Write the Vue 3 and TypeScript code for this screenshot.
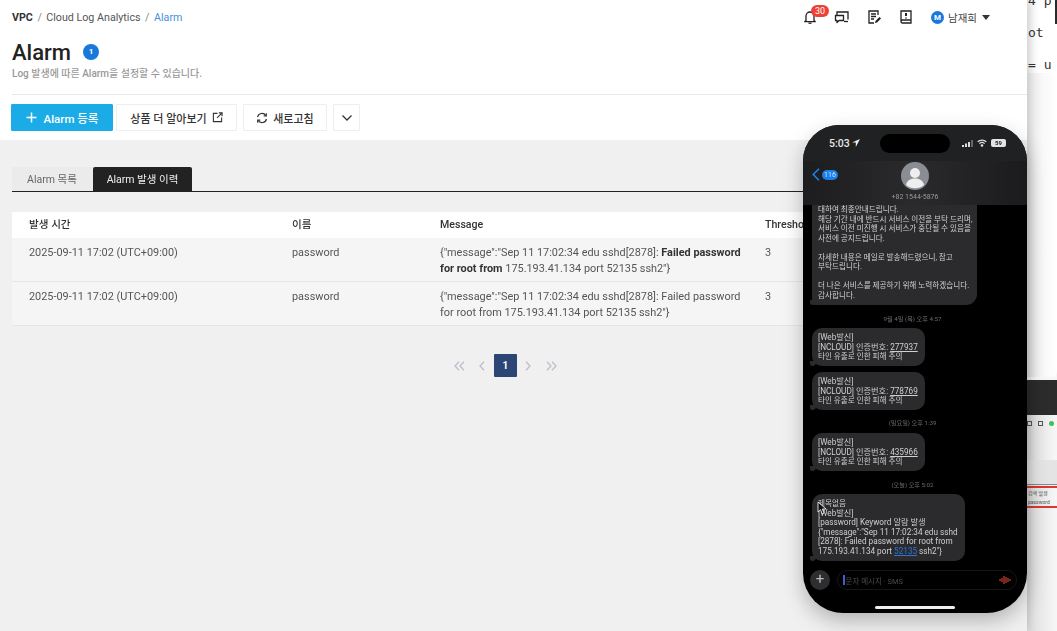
<template>
  <div class="screen">
    <main class="console">
      <header class="page-head">
        <div class="topbar">
          <nav class="crumbs">
            <b>VPC</b><i>/</i><span>Cloud Log Analytics</span><i>/</i><span class="current">Alarm</span>
          </nav>
          <div class="tools">
            <span class="tool bell">
              <svg width="16" height="16" viewBox="0 0 16 16" fill="none" stroke="#222" stroke-width="1.3"><path d="M4 11.5V7a4 4 0 0 1 8 0v4.5l1.3 1.2H2.7z" stroke-linejoin="round" /><path d="M6.5 14.2h3" /></svg>
              <em>30</em>
            </span>
            <span class="tool">
              <svg width="16" height="16" viewBox="0 0 16 16" fill="none" stroke="#222" stroke-width="1.3"><path d="M3 10V3h11v7.5" /><path d="M1.5 6.5h8v5H5l-2 2v-2H1.500z" fill="#fff" stroke-linejoin="round" /><path d="M10 12.500h4" /></svg>
            </span>
            <span class="tool">
              <svg width="16" height="16" viewBox="0 0 16 16" fill="none" stroke="#222" stroke-width="1.300"><path d="M12 6V2H3v12h5" /><path d="M5 5h5M5 7.500h5M5 10h3" /><path d="M9 14l.5-2 4-4 1.500 1.500-4 4z" fill="#222" stroke="none" /></svg>
            </span>
            <span class="tool">
              <svg width="16" height="16" viewBox="0 0 16 16" fill="none" stroke="#222" stroke-width="1.300"><path d="M3 12.500V2h10v12H4.500A1.500 1.500 0 0 1 3 12.500a1.500 1.500 0 0 1 1.500-1.500H13" /><path d="M8 4v3" stroke-width="2" /><circle cx="8" cy="9" r=".8" fill="#222" stroke="none" /></svg>
            </span>
            <span class="user"><span class="avatar">M</span>남재희<span class="caret" /></span>
          </div>
        </div>

        <div class="title-row">
          <h1>Alarm</h1>
          <span class="count">1</span>
        </div>
        <p class="desc">Log 발생에 따른 Alarm을 설정할 수 있습니다.</p>

        <div class="actions">
          <button class="btn primary">
            <svg width="11" height="11" viewBox="0 0 11 11" stroke="#fff" stroke-width="1.500"><path d="M5.500 0.500v10M0.500 5.500h10" /></svg>
            Alarm 등록
          </button>
          <button class="btn">
            상품 더 알아보기
            <svg width="11" height="11" viewBox="0 0 12 12" fill="none" stroke="#333" stroke-width="1.200"><path d="M6 1.500H1.500v9h9V6" /><path d="M5.500 6.500l5-5M7.500 1h3.500v3.500" /></svg>
          </button>
          <button class="btn">
            <svg width="12" height="12" viewBox="0 0 12 12" fill="none" stroke="#333" stroke-width="1.200"><path d="M1.500 5a4.600 4.600 0 0 1 8.300-1.500M10.500 7a4.600 4.600 0 0 1-8.300 1.500" /><path d="M10.300 1.200v2.600H7.700M1.700 10.800V8.200h2.600" /></svg>
            새로고침
          </button>
          <button class="btn square">
            <svg width="12" height="8" viewBox="0 0 12 8" fill="none" stroke="#333" stroke-width="1.300"><path d="M1.500 1.500L6 6l4.500-4.500" /></svg>
          </button>
        </div>
      </header>

      <section class="content">
        <div class="tabs">
          <span class="tab">Alarm 목록</span>
          <span class="tab active">Alarm 발생 이력</span>
        </div>

        <div class="table">
          <div class="row head">
            <div v-for="col in columns" :key="col">{{ col }}</div>
          </div>
          <div v-for="(row, i) in rows" :key="i" class="row">
            <div>{{ row.time }}</div>
            <div>{{ row.name }}</div>
            <div>{{ row.before }}<b v-if="row.strong">{{ row.strong }}</b>{{ row.after }}</div>
            <div>{{ row.threshold }}</div>
          </div>
        </div>

        <div class="pager">
          <svg class="far-left" width="11" height="10" viewBox="0 0 11 10" fill="none" stroke="#bcbfc8" stroke-width="1.300"><path d="M5 .8L1 5l4 4.200M10 .8L6 5l4 4.200" /></svg>
          <svg width="6" height="10" viewBox="0 0 6 10" fill="none" stroke="#bcbfc8" stroke-width="1.300"><path d="M5 .8L1 5l4 4.200" /></svg>
          <span class="page">1</span>
          <svg width="6" height="10" viewBox="0 0 6 10" fill="none" stroke="#bcbfc8" stroke-width="1.300"><path d="M1 .8L5 5 1 9.200" /></svg>
          <svg class="far-right" width="11" height="10" viewBox="0 0 11 10" fill="none" stroke="#bcbfc8" stroke-width="1.300"><path d="M1 .8L5 5 1 9.200M6 .8L10 5 6 9.200" /></svg>
        </div>
      </section>
    </main>

    <aside class="behind">
      <pre class="code">4 p

ot

= u</pre>
      <div class="blank" />
      <div class="dark-band" />
      <div class="browser">
        <div class="browser-bar">
          <span class="mini" />
          <span class="mini" />
          <span class="dot" />
          <span class="bar-text">A</span>
        </div>
        <div class="browser-grey" />
        <div class="browser-rows">
          <span>검색 발생</span>
          <span>password</span>
        </div>
      </div>
      <span class="sliver" />
    </aside>

    <div class="phone">
      <div class="status">
        <span class="clock">5:03
          <svg width="8" height="8" viewBox="0 0 8 8" fill="#eee"><path d="M8 0L0 3.600h3.800V8z" /></svg>
        </span>
        <span class="island" />
        <span class="signals">
          <svg width="11" height="7" viewBox="0 0 11 7" fill="#ddd"><rect y="5" width="2" height="2" /><rect x="3" y="3.500" width="2" height="3.500" /><rect x="6" y="2" width="2" height="5" /><rect x="9" width="2" height="7" fill="#666" /></svg>
          <svg width="10" height="8" viewBox="0 0 10 8" fill="none" stroke="#ddd" stroke-width="1.300"><path d="M.7 2.800a6.200 6.200 0 0 1 8.600 0M2.400 4.600a3.800 3.800 0 0 1 5.200 0" /><circle cx="5" cy="6.500" r=".7" fill="#ddd" /></svg>
          <span class="battery">59</span>
        </span>
      </div>

      <div class="contact">
        <span class="back">
          <svg width="8" height="13" viewBox="0 0 8 13" fill="none" stroke="#1a84f0" stroke-width="1.500"><path d="M7 .8L1.200 6.500 7 12.200" /></svg>
          <span class="unread">116</span>
        </span>
        <svg class="face" width="28" height="28" viewBox="0 0 28 28"><circle cx="14" cy="14" r="14" fill="#8b8d94" /><circle cx="14" cy="11" r="5" fill="#eee" /><path d="M5 23c1-5 5-6.500 9-6.500s8 1.500 9 6.500a14 14 0 0 1-18 0z" fill="#eee" /></svg>
        <span class="number">+82 1544-5876</span>
      </div>

      <div class="thread">
        <template v-for="(item, i) in thread" :key="i">
          <div v-if="item.stamp" class="stamp" :style="{ marginTop: item.gap + 'px' }">{{ item.stamp }}</div>
          <div v-else class="bubble" :style="{ marginTop: item.gap + 'px' }">
            <div v-for="(line, j) in item.lines" :key="j" :class="['line', { ko: line.ko }]">
              <template v-if="line.code">{{ line.text }}<u>{{ line.code }}</u></template>
              <template v-else-if="line.link">{{ line.text }}<a>{{ line.link }}</a>{{ line.after }}</template>
              <template v-else>{{ line.text }}</template>
            </div>
          </div>
        </template>
        <svg class="pointer" width="10" height="14" viewBox="0 0 10 14"><path d="M1 1v10l2.500-2.300L5.300 13l1.800-.8-1.800-4.200H9z" fill="#111" stroke="#fff" stroke-width=".8" /></svg>
      </div>

      <div class="compose">
        <span class="plus">+</span>
        <div class="field">
          <span class="text-caret" />
          <span class="hint">문자 메시지 · SMS</span>
          <svg width="12" height="10" viewBox="0 0 12 10" stroke="#c8402f" stroke-width="1.200"><path d="M1 4v2M3 3v4M5 1v8M7 2v6M9 3v4M11 4v2" /></svg>
        </div>
      </div>
      <div class="home" />
    </div>
  </div>
</template>

<script setup lang="ts">
interface Line {
  text: string;
  ko?: boolean;
  code?: string;
  link?: string;
  after?: string;
}

interface ThreadItem {
  stamp?: string;
  gap: number;
  lines?: Line[];
}

const columns = ['발생 시간', '이름', 'Message', 'Threshold'];

const rows = [
  {
    time: '2025-09-11 17:02 (UTC+09:00)',
    name: 'password',
    before: '{"message":"Sep 11 17:02:34 edu sshd[2878]: ',
    strong: 'Failed password for root from',
    after: ' 175.193.41.134 port 52135 ssh2"}',
    threshold: 3,
  },
  {
    time: '2025-09-11 17:02 (UTC+09:00)',
    name: 'password',
    before: '{"message":"Sep 11 17:02:34 edu sshd[2878]: Failed password for root from 175.193.41.134 port 52135 ssh2"}',
    strong: '',
    after: '',
    threshold: 3,
  },
];

const otp = (code: string): Line[] => [
  { text: '[Web발신]' },
  { text: '[NCLOUD] 인증번호: ', code },
  { text: '타인 유출로 인한 피해 주의', ko: true },
];

const thread: ThreadItem[] = [
  {
    gap: 0,
    lines: [
      { text: '대하여 최종안내드립니다.', ko: true },
      { text: '해당 기간 내에 반드시 서비스 이전을 부탁 드리며,', ko: true },
      { text: '서비스 이전 미진행 시 서비스가 중단될 수 있음을', ko: true },
      { text: '사전에 공지드립니다.', ko: true },
      { text: '\u00a0' },
      { text: '자세한 내용은 메일로 발송해드렸으니, 참고', ko: true },
      { text: '부탁드립니다.', ko: true },
      { text: '\u00a0' },
      { text: '더 나은 서비스를 제공하기 위해 노력하겠습니다.', ko: true },
      { text: '감사합니다.', ko: true },
    ],
  },
  { stamp: '9월 4일 (목) 오후 4:57', gap: 9 },
  { gap: 4, lines: otp('277937') },
  { gap: 6, lines: otp('778769') },
  { stamp: '(일요일) 오후 1:39', gap: 8 },
  { gap: 5, lines: otp('435966') },
  { stamp: '(오늘) 오후 5:02', gap: 9 },
  {
    gap: 4,
    lines: [
      { text: '제목없음', ko: true },
      { text: '[Web발신]' },
      { text: '[password] Keyword 알람 발생' },
      { text: '{"message":"Sep 11 17:02:34 edu sshd' },
      { text: '[2878]: Failed password for root from' },
      { text: '175.193.41.134 port ', link: '52135', after: ' ssh2"}' },
    ],
  },
];
</script>

<style>
html,
body {
  margin: 0;
  overflow: hidden;
}
</style>

<style scoped>
.screen {
  position: relative;
  display: flex;
  width: 1057px;
  height: 631px;
  overflow: hidden;
  font-family: Roboto, "Noto Sans CJK KR", sans-serif;
  color: #333;
  filter: blur(0.35px);
}

.console {
  display: flex;
  flex-direction: column;
  width: 1027px;
  flex: none;
  background: #f0f0f0;
  box-shadow: 2px 0 8px rgba(0, 0, 0, 0.12);
  z-index: 1;
}

.page-head {
  box-sizing: border-box;
  height: 140px;
  padding: 0 0 0 12px;
  background: #fff;
}

.topbar {
  display: flex;
  align-items: center;
  justify-content: space-between;
  height: 34px;
  padding-right: 37px;
}

.crumbs {
  display: flex;
  align-items: center;
  font-size: 10.7px;
  color: #555;
}

.crumbs b {
  color: #333;
  font-weight: 700;
}

.crumbs i {
  margin: 0 4.500px;
  font-style: normal;
  color: #888;
}

.current {
  color: #4a90d9;
}

.tools {
  display: flex;
  align-items: center;
  gap: 16px;
}

.tool {
  position: relative;
  display: flex;
}

.tool em {
  position: absolute;
  left: 9px;
  top: -4px;
  width: 18px;
  height: 12px;
  border-radius: 6px;
  background: #ee4035;
  color: #fff;
  font: 9px/12px Roboto, sans-serif;
  text-align: center;
}

.user {
  display: flex;
  align-items: center;
  margin-left: 1px;
  font-size: 10.500px;
  color: #444;
}

.avatar {
  width: 13px;
  height: 13px;
  margin-right: 4px;
  border-radius: 50%;
  background: #1a78dc;
  color: #fff;
  font: 700 8px/13px Roboto, sans-serif;
  text-align: center;
}

.caret {
  margin-left: 5px;
  border: 4px solid transparent;
  border-top: 5px solid #333;
  border-bottom: 0;
}

.title-row {
  display: flex;
  align-items: center;
  gap: 12px;
  height: 32px;
  margin-top: 2px;
}

h1 {
  margin: 0;
  font-size: 22px;
  font-weight: 500;
  color: #222;
}

.count {
  width: 16px;
  height: 16px;
  border-radius: 50%;
  background: #1a78dc;
  color: #fff;
  font: 700 8px/16px Roboto, sans-serif;
  text-align: center;
}

.desc {
  margin: 0;
  height: 21px;
  padding-bottom: 5px;
  border-bottom: 1px solid #e8e8e8;
  font-size: 10px;
  line-height: 12px;
  font-weight: 500;
  color: #999;
}

.actions {
  display: flex;
  gap: 6px;
  padding-top: 9px;
  margin-left: -1px;
}

.btn {
  display: flex;
  align-items: center;
  justify-content: center;
  gap: 5px;
  box-sizing: border-box;
  height: 27px;
  padding: 0;
  border: 1px solid #eee;
  border-radius: 1px;
  background: #fff;
  color: #333;
  font: 500 11px Roboto, "Noto Sans CJK KR", sans-serif;
}

.btn:nth-child(1) {
  width: 102px;
  margin-right: -3px;
  gap: 7px;
  font-size: 11.500px;
}

.btn:nth-child(2) {
  width: 121px;
}

.btn:nth-child(3) {
  width: 84px;
}

.btn.primary {
  background: #1bace8;
  border-color: #1bace8;
  color: #fff;
}

.btn.square {
  width: 27px;
}

.content {
  flex: 1;
  padding: 27px 12px 0 11.500px;
}

.tabs {
  display: flex;
  height: 24px;
  border-bottom: 1.500px solid #222;
}

.tab {
  box-sizing: border-box;
  width: 81px;
  padding-top: 6px;
  background: #ebebeb;
  font-size: 10.500px;
  line-height: 14px;
  text-align: center;
  color: #666;
}

.tab.active {
  width: 99px;
  margin-left: 0.500px;
  background: #222;
  border-radius: 2px 2px 0 0;
  color: #eee;
}

.table {
  margin: 20px 0 0 0.500px;
}

.row {
  display: grid;
  grid-template-columns: 263px 148px 325px 1fr;
  box-sizing: border-box;
  height: 44px;
  padding-top: 7px;
  border-bottom: 1px solid #e6e6e6;
  background: #f5f5f5;
  font-size: 10.900px;
  line-height: 16px;
  color: #555;
}

.row > div {
  padding-left: 17px;
}

.row b {
  color: #333;
}

.row.head {
  height: 26px;
  padding-top: 5px;
  border-bottom: 0;
  background: #fff;
  font-size: 10.600px;
  font-weight: 500;
  color: #333;
}

.pager {
  display: flex;
  align-items: center;
  justify-content: center;
  gap: 8.500px;
  margin-top: 28px;
  padding-right: 16px;
}

.far-left {
  margin-right: 6px;
}

.far-right {
  margin-left: 6px;
}

.page {
  width: 23px;
  height: 23px;
  border-radius: 1px;
  background: #2c4577;
  color: #fff;
  font: 700 10px/23px Roboto, sans-serif;
  text-align: center;
}

.behind {
  display: flex;
  flex-direction: column;
  flex: 1;
  min-width: 0;
  background: #f7f7f7;
}

.code {
  flex: none;
  height: 80px;
  margin: -7px 0 0;
  padding-left: 1px;
  background: linear-gradient(90deg, #ececec, #fff 40%);
  font: 13px/16px "DejaVu Sans Mono", monospace;
  color: #333;
}

.sliver {
  position: absolute;
  right: 0;
  top: 0;
  width: 2px;
  height: 24px;
  background: #2a2a2a;
}

.blank {
  flex: 1;
  background: linear-gradient(90deg, #e2e2e2, #f8f8f8 50%, #fff);
  border-bottom-right-radius: 6px;
}

.dark-band {
  height: 35px;
  margin-top: 3px;
  background: #2c2c2c;
}

.browser {
  height: 216px;
  background: linear-gradient(90deg, #dcdcdc, #f7f7f7);
}

.browser-bar {
  display: flex;
  align-items: center;
  gap: 6px;
  box-sizing: border-box;
  height: 45px;
  padding: 0 0 29px;
  overflow: hidden;
}

.mini {
  flex: none;
  width: 5px;
  height: 5px;
  border: 1px solid #555;
  box-sizing: border-box;
}

.dot {
  flex: none;
  width: 5px;
  height: 5px;
  border-radius: 50%;
  background: #3cc35a;
}

.bar-text {
  margin-left: -3px;
  font-size: 6px;
  color: #555;
}

.browser-grey {
  height: 24px;
  background: #e4e4e4;
  border-bottom: 1px solid #888;
  margin-bottom: 1px;
}

.browser-rows {
  display: flex;
  flex-direction: column;
  gap: 3px;
  box-sizing: border-box;
  height: 22px;
  padding: 2px 0 0 1px;
  border-top: 2px solid #d83a30;
  border-bottom: 2px solid #d83a30;
  font-size: 5px;
  line-height: 6px;
  color: #555;
  white-space: nowrap;
  overflow: hidden;
}

.phone {
  position: absolute;
  left: 803px;
  top: 125px;
  z-index: 2;
  display: flex;
  flex-direction: column;
  box-sizing: border-box;
  width: 224px;
  height: 488px;
  border-radius: 36px 36px 40px 40px;
  overflow: hidden;
  background: #000;
  color: #d8d8d8;
  box-shadow: 0 8px 20px rgba(0, 0, 0, 0.25);
}

.status {
  display: flex;
  align-items: center;
  justify-content: space-between;
  box-sizing: border-box;
  height: 36px;
  padding: 0 21px 0 26px;
  background: #202122;
}

.clock {
  display: flex;
  align-items: center;
  gap: 2px;
  font-size: 10.500px;
  font-weight: 500;
  color: #e8e8e8;
}

.island {
  width: 70px;
  height: 19px;
  margin: 1px 0 0 8px;
  border-radius: 10px;
  background: #000;
}

.signals {
  display: flex;
  align-items: center;
  gap: 4px;
}

.battery {
  width: 15px;
  height: 8px;
  border-radius: 2px;
  background: #e4e4e4;
  color: #222;
  font: 700 6px/8px Roboto, sans-serif;
  text-align: center;
}

.contact {
  position: relative;
  display: flex;
  flex-direction: column;
  align-items: center;
  height: 44px;
  background: linear-gradient(90deg, #1d1d1f, #2a2a2c 50%, #1b1b1d);
}

.back {
  position: absolute;
  left: 9px;
  top: 7px;
  display: flex;
  align-items: center;
  gap: 2px;
}

.unread {
  width: 16px;
  height: 10px;
  border-radius: 5px;
  background: #1a7fe8;
  color: #cfe4ff;
  font: 7px/10px Roboto, sans-serif;
  text-align: center;
}

.face {
  margin-top: 1px;
}

.number {
  margin-top: 2px;
  font-size: 7px;
  line-height: 10px;
  color: #9a9a9a;
}

.thread {
  position: relative;
  flex: 1;
  padding-left: 9px;
  background: #000;
  overflow: hidden;
}

.bubble {
  position: relative;
  width: fit-content;
  box-sizing: border-box;
  padding: 5px 7px 4.500px 6px;
  border-radius: 10px;
  background: #2b2b2d;
  font-size: 8.200px;
  line-height: 9.500px;
  white-space: nowrap;
  color: #cfcfcf;
}

/* message tail */
.bubble::after {
  content: "";
  position: absolute;
  left: -2px;
  bottom: 0;
  width: 6px;
  height: 5px;
  background: #2b2b2d;
  border-radius: 0 0 5px 3px;
}

.bubble:first-child {
  width: 165px;
  padding: 0 0 5px 6px;
  border-radius: 0 0 11px 4px;
}

.line.ko {
  font-size: 7.600px;
}

.bubble u {
  text-decoration: underline;
}

.bubble a {
  color: #2a74d8;
  text-decoration: underline;
}

.stamp {
  height: 10px;
  text-align: center;
  padding-right: 14px;
  font-size: 6.200px;
  line-height: 10px;
  color: #6c6c6c;
}

.pointer {
  position: absolute;
  left: 14px;
  top: 296px;
}

.compose {
  display: flex;
  align-items: center;
  gap: 7px;
  height: 28px;
  margin-bottom: 19px;
  padding: 0 10px 0 7px;
}

.plus {
  width: 20px;
  height: 20px;
  flex: none;
  border-radius: 50%;
  background: #2e2e30;
  color: #bbb;
  font: 400 15px/19px Roboto, sans-serif;
  text-align: center;
}

.field {
  display: flex;
  align-items: center;
  gap: 1px;
  flex: 1;
  height: 20px;
  padding: 0 5px;
  border: 1px solid #161618;
  border-radius: 10px;
  box-sizing: border-box;
}

.text-caret {
  width: 1.500px;
  height: 10px;
  background: #3d5fd0;
}

.hint {
  flex: 1;
  font-size: 7.500px;
  color: #4a4a4a;
}

.home {
  position: absolute;
  left: 72px;
  bottom: 4px;
  width: 80px;
  height: 3px;
  border-radius: 2px;
  background: #eee;
}
</style>
